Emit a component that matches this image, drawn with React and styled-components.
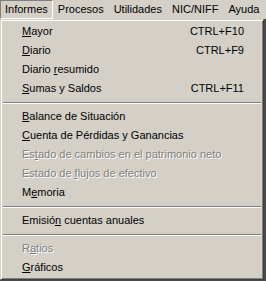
import React from "react";
import styled, { createGlobalStyle, css } from "styled-components";

const Global = createGlobalStyle`
  html, body { margin: 0; padding: 0; background: #4a4a4a; }
  body { font-family: "Liberation Sans", Arial, sans-serif; font-size: 11px; color: #000; }
`;

const Page = styled.div`
  width: 266px;
  height: 281px;
  display: flex;
  flex-direction: column;
  background: #4a4a4a;
`;

const MenuBar = styled.div`
  height: 19px;
  display: flex;
  align-items: stretch;
  background: #d4d0c8;
`;

const BarItem = styled.div`
  display: flex;
  align-items: center;
  padding: 0 4px;
  border: 1px solid transparent;
  height: 17px;
  line-height: 17px;
  ${(p) =>
    p.$pressed &&
    css`
      border-color: #808080 #ffffff #ffffff #808080;
    `}
`;

const Dropdown = styled.div`
  width: 264px;
  box-sizing: border-box;
  background: #d4d0c8;
  border: 1px solid;
  border-color: #d4d0c8 #404040 #404040 #d4d0c8;
  box-shadow: inset 1px 1px 0 #ffffff, inset -1px -1px 0 #808080;
  padding: 2px;
  display: flex;
  flex-direction: column;
`;

const Row = styled.div`
  height: 19px;
  box-sizing: border-box;
  display: flex;
  align-items: center;
  justify-content: space-between;
  padding: 0 17px 2px 19px;
  white-space: nowrap;
  ${(p) =>
    p.$disabled &&
    css`
      color: #808080;
      text-shadow: 1px 1px 0 #ffffff;
    `}
`;

const Shortcut = styled.span``;

const Mn = styled.span`
  text-decoration: underline;
`;

const Separator = styled.div`
  height: 2px;
  margin: 4px 0 3px;
  border-top: 1px solid #808080;
  border-bottom: 1px solid #ffffff;
  box-sizing: border-box;
`;

const label = (text, idx) => (
  <span>
    {text.slice(0, idx)}
    <Mn>{text[idx]}</Mn>
    {text.slice(idx + 1)}
  </span>
);

const groups = [
  [
    { t: "Mayor", m: 0, k: "CTRL+F10" },
    { t: "Diario", m: 0, k: "CTRL+F9" },
    { t: "Diario resumido", m: 7 },
    { t: "Sumas y Saldos", m: 0, k: "CTRL+F11" },
  ],
  [
    { t: "Balance de Situación", m: 0 },
    { t: "Cuenta de Pérdidas y Ganancias", m: 0 },
    { t: "Estado de cambios en el patrimonio neto", m: 2, d: true },
    { t: "Estado de flujos de efectivo", m: 10, d: true },
    { t: "Memoria", m: 1 },
  ],
  [{ t: "Emisión cuentas anuales", m: 6 }],
  [
    { t: "Ratios", m: 1, d: true },
    { t: "Gráficos", m: 0 },
  ],
];

export default function App() {
  return (
    <Page>
      <Global />
      <MenuBar>
        <BarItem $pressed>Informes</BarItem>
        <BarItem>Procesos</BarItem>
        <BarItem>Utilidades</BarItem>
        <BarItem>NIC/NIFF</BarItem>
        <BarItem>Ayuda</BarItem>
      </MenuBar>
      <Dropdown>
        {groups.map((g, gi) => (
          <React.Fragment key={gi}>
            {gi > 0 && <Separator />}
            {g.map((it) => (
              <Row key={it.t} $disabled={it.d}>
                {label(it.t, it.m)}
                {it.k && <Shortcut>{it.k}</Shortcut>}
              </Row>
            ))}
          </React.Fragment>
        ))}
      </Dropdown>
    </Page>
  );
}
